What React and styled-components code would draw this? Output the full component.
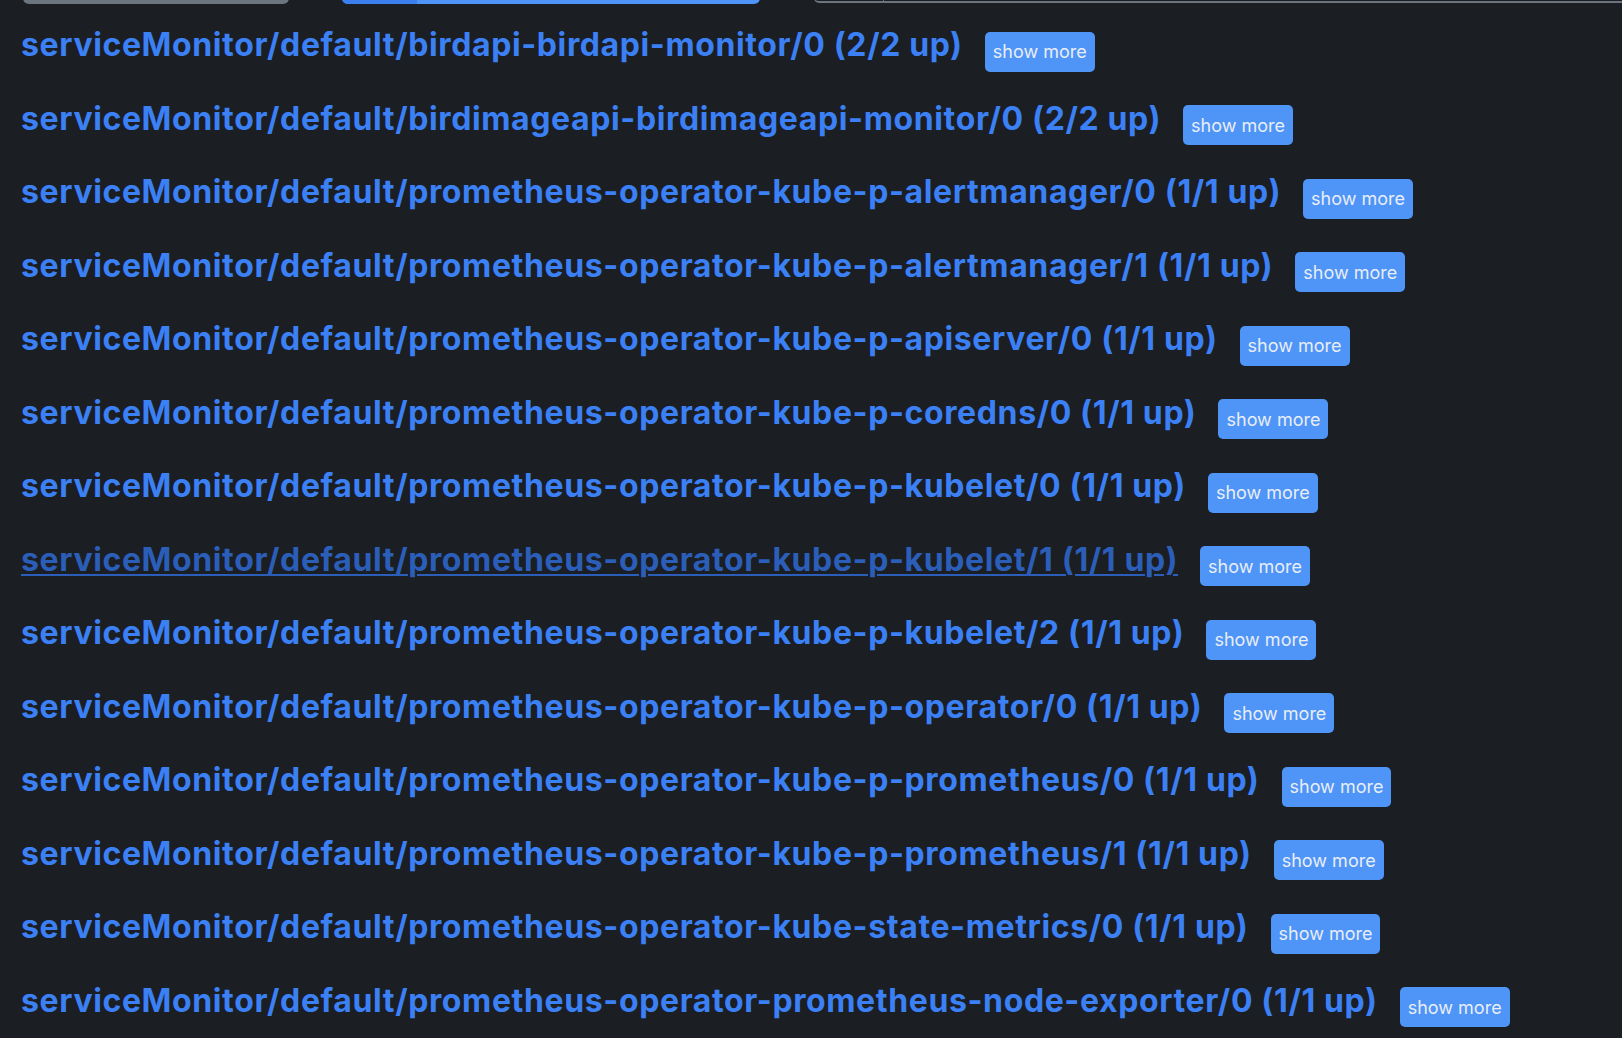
import React from 'react';
import styled, { createGlobalStyle } from 'styled-components';

const GlobalStyle = createGlobalStyle`
  html, body {
    margin: 0;
    padding: 0;
    background-color: #1b1e22;
  }
  body {
    font-family: Inter, "Liberation Sans", sans-serif;
    overflow: hidden;
  }
`;

const Page = styled.div`
  min-height: 100vh;
  background-color: #1b1e22;
`;

// only the bottom edge of the toolbar is still on screen
const Toolbar = styled.div`
  height: 4px;
  overflow: hidden;
  display: flex;
  align-items: flex-end;
  padding-left: 23px;
`;

const GrayButton = styled.div`
  width: 266px;
  height: 40px;
  flex-shrink: 0;
  background-color: #6c757d;
  border-radius: 6px;
`;

const Progress = styled.div`
  width: 418px;
  height: 40px;
  flex-shrink: 0;
  margin-left: 53px;
  display: flex;
  background-color: #4f94f7;
  border-radius: 6px;
  overflow: hidden;
`;

const ProgressFill = styled.div`
  width: 75px;
  background-color: #3b7eed;
`;

const InputGroup = styled.div`
  flex: 1;
  margin-left: 54px;
  display: flex;
  align-items: flex-end;
`;

const OutlineButton = styled.div`
  width: 70px;
  height: 40px;
  flex-shrink: 0;
  box-sizing: border-box;
  border: 1px solid #6c757d;
  border-bottom-width: 2px;
  border-radius: 0 0 0 5px;
  margin-bottom: 1px;
`;

const Input = styled.div`
  flex: 1;
  height: 40px;
  margin-bottom: 1px;
  border-bottom: 2px solid #6c757d;
`;

const List = styled.div`
  padding: 22.4px 0 0 21px;
  display: flex;
  flex-direction: column;
`;

const Row = styled.div`
  height: 73.5px;
  display: flex;
  align-items: flex-start;
  gap: 22px;
`;

const Title = styled.a`
  font-size: 32px;
  line-height: 38px;
  font-weight: 700;
  letter-spacing: 0.62px;
  white-space: nowrap;
  color: ${(p) => (p.$hover ? '#2b5eb9' : '#3b80f4')};
  text-decoration: ${(p) => (p.$hover ? 'underline' : 'none')};
  text-decoration-thickness: 2px;
  text-underline-offset: 3px;
  cursor: pointer;
`;

const MoreButton = styled.button`
  margin-top: 5.6px;
  height: 40px;
  padding: 0 8px;
  border: none;
  border-radius: 5px;
  background-color: #4f94f7;
  color: #e8eef8;
  font-family: Inter, "Liberation Sans", sans-serif;
  font-size: 18px;
  font-weight: 400;
  white-space: nowrap;
  cursor: pointer;
`;

const P = 'serviceMonitor/default/prometheus-operator-kube-p-';

const monitors = [
  'serviceMonitor/default/birdapi-birdapi-monitor/0 (2/2 up)',
  'serviceMonitor/default/birdimageapi-birdimageapi-monitor/0 (2/2 up)',
  P + 'alertmanager/0 (1/1 up)',
  P + 'alertmanager/1 (1/1 up)',
  P + 'apiserver/0 (1/1 up)',
  P + 'coredns/0 (1/1 up)',
  P + 'kubelet/0 (1/1 up)',
  P + 'kubelet/1 (1/1 up)',
  P + 'kubelet/2 (1/1 up)',
  P + 'operator/0 (1/1 up)',
  P + 'prometheus/0 (1/1 up)',
  P + 'prometheus/1 (1/1 up)',
  'serviceMonitor/default/prometheus-operator-kube-state-metrics/0 (1/1 up)',
  'serviceMonitor/default/prometheus-operator-prometheus-node-exporter/0 (1/1 up)',
];

export default function App() {
  return (
    <Page>
      <GlobalStyle />
      <Toolbar>
        <GrayButton />
        <Progress>
          <ProgressFill />
        </Progress>
        <InputGroup>
          <OutlineButton />
          <Input />
        </InputGroup>
      </Toolbar>
      <List>
        {monitors.map((name, i) => (
          <Row key={name}>
            <Title $hover={i === 7}>{name}</Title>
            <MoreButton>show more</MoreButton>
          </Row>
        ))}
      </List>
    </Page>
  );
}
